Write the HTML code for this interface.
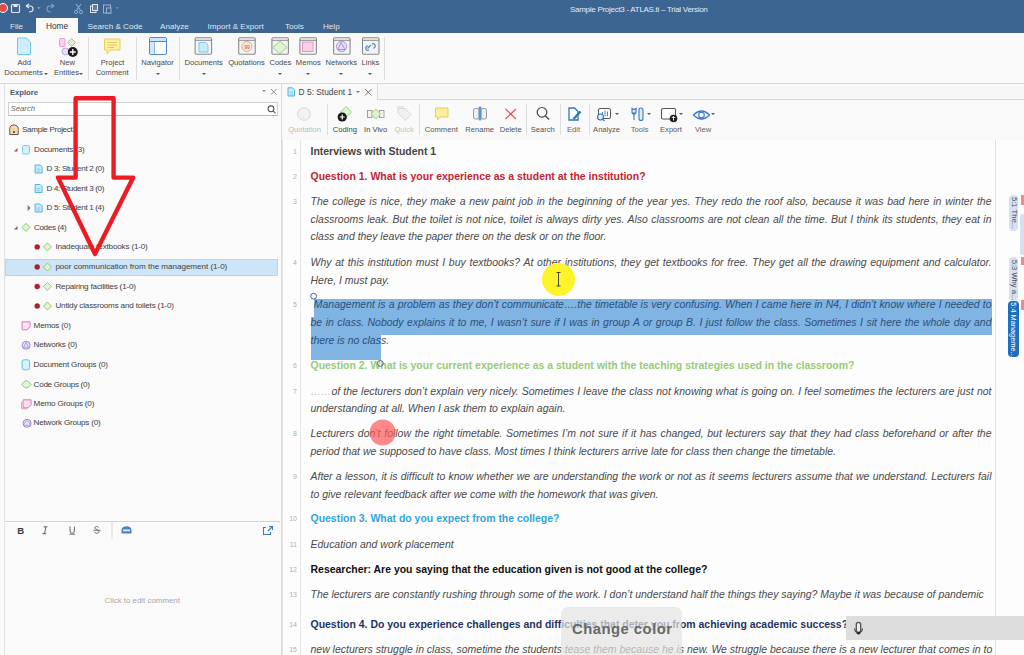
<!DOCTYPE html>
<html><head><meta charset="utf-8">
<style>
*{box-sizing:border-box;margin:0;padding:0}
html,body{width:1024px;height:655px;overflow:hidden;background:#fafafa;font-family:"Liberation Sans",sans-serif;position:relative}
.a{position:absolute;white-space:nowrap}
.dl{left:310.5px;width:681px;height:18px;line-height:18px;font-size:10.48px;color:#333;z-index:2}
.it{font-style:italic;color:#4a4a4a}
.j{text-align:justify;text-align-last:justify}
.hl{color:#2e507a}
.h1{font-weight:bold;color:#444}
.h1b{font-weight:bold;color:#111}
.q1{font-weight:bold;color:#c42330}
.q2{font-weight:bold;color:#97cb78}
.q3{font-weight:bold;color:#30a5dc}
.q4{font-weight:bold;color:#1f3262}
.lnum{left:283px;width:14px;text-align:right;font-size:7px;line-height:18px;color:#b0b0b0;z-index:2}
</style></head><body>
<div class="a" style="left:0;top:0;width:1024px;height:33px;background:#3d6591"></div>
<div class="a" style="left:36px;top:18px;width:42px;height:16px;background:#f9f9f9"></div>
<div class="a" style="left:10.0px;top:22.5px;font-size:8.1px;line-height:8.1px;color:#dfe7f0;">File</div>
<div class="a" style="left:87.5px;top:22.5px;font-size:8.1px;line-height:8.1px;color:#dfe7f0;">Search &amp; Code</div>
<div class="a" style="left:160.0px;top:22.5px;font-size:8.1px;line-height:8.1px;color:#dfe7f0;">Analyze</div>
<div class="a" style="left:207.5px;top:22.5px;font-size:8.1px;line-height:8.1px;color:#dfe7f0;">Import &amp; Export</div>
<div class="a" style="left:285.0px;top:22.5px;font-size:8.1px;line-height:8.1px;color:#dfe7f0;">Tools</div>
<div class="a" style="left:323.0px;top:22.5px;font-size:8.1px;line-height:8.1px;color:#dfe7f0;">Help</div>
<div class="a" style="left:46.0px;top:22.2px;font-size:8.3px;line-height:8.3px;color:#333;">Home</div>
<div class="a" style="left:570.0px;top:5.8px;font-size:8px;line-height:8.0px;color:#e4ebf3;letter-spacing:-0.28px">Sample Project3 - ATLAS.ti – Trial Version</div>
<svg class="a" style="left:0;top:0" width="130" height="18" viewBox="0 0 130 18">
<circle cx="3" cy="8" r="4.5" fill="#e04a4a" stroke="#fff" stroke-width="1"/>
<rect x="11.5" y="4.5" width="8" height="8" rx="1" fill="none" stroke="#dfe7f0" stroke-width="1.2"/>
<rect x="13.5" y="4.5" width="4" height="2.5" fill="#dfe7f0"/>
<path d="M26 6 L29 4 M26 6 L29 8 M26 6 H30 Q33 6 33 9 Q33 12 29 12" fill="none" stroke="#dfe7f0" stroke-width="1.2"/>
<path d="M37.5 7.5 l1.3 1.3 l1.3 -1.3z" fill="#dfe7f0"/>
<path d="M54 6 L51 4 M54 6 L51 8 M54 6 H50 Q47 6 47 9 Q47 12 51 12" fill="none" stroke="#7f9cc0" stroke-width="1.2"/>
<path d="M76 4 L81 11 M81 4 L76 11" stroke="#8ba8cc" stroke-width="1.2"/><circle cx="76" cy="12" r="1.6" fill="none" stroke="#8ba8cc"/><circle cx="81" cy="12" r="1.6" fill="none" stroke="#8ba8cc"/>
<rect x="90.5" y="6" width="5.5" height="6.5" fill="none" stroke="#dfe7f0" stroke-width="1"/><rect x="92.5" y="4.5" width="5" height="6" fill="#5a7ea8" stroke="#dfe7f0" stroke-width="1"/>
<rect x="103.5" y="5" width="7" height="8" fill="none" stroke="#9ab2d0" stroke-width="1"/><rect x="106.5" y="8" width="4.5" height="5" fill="#3d6591" stroke="#9ab2d0" stroke-width="1"/>
<path d="M116 7.5 l1.3 1.3 l1.3 -1.3z" fill="#9ab2d0"/>
</svg>
<div class="a" style="left:0;top:33px;width:1024px;height:51px;background:#f9f9f9;border-bottom:1px solid #d9d9d9"></div>
<div class="a" style="left:87.7px;top:37px;width:1px;height:43px;background:#dcdcdc"></div>
<div class="a" style="left:136.3px;top:37px;width:1px;height:43px;background:#dcdcdc"></div>
<div class="a" style="left:179.2px;top:37px;width:1px;height:43px;background:#dcdcdc"></div>
<div class="a" style="left:383.5px;top:37px;width:1px;height:43px;background:#dcdcdc"></div>
<div class="a" style="left:-35.8px;width:120px;text-align:center;top:59.2px;font-size:7.6px;line-height:7.6px;height:7.6px;color:#4a4a4a;">Add</div>
<div class="a" style="left:-36.5px;width:120px;text-align:center;top:69.2px;font-size:7.6px;line-height:7.6px;height:7.6px;color:#4a4a4a;">Documents</div>
<div class="a" style="left:43.5px;top:72.8px;width:0;height:0;border-left:2.0px solid transparent;border-right:2.0px solid transparent;border-top:2.0px solid #555"></div>
<div class="a" style="left:7.4px;width:120px;text-align:center;top:59.2px;font-size:7.6px;line-height:7.6px;height:7.6px;color:#4a4a4a;">New</div>
<div class="a" style="left:6.5px;width:120px;text-align:center;top:69.2px;font-size:7.6px;line-height:7.6px;height:7.6px;color:#4a4a4a;">Entities</div>
<div class="a" style="left:79.3px;top:72.8px;width:0;height:0;border-left:2.0px solid transparent;border-right:2.0px solid transparent;border-top:2.0px solid #555"></div>
<div class="a" style="left:52.5px;width:120px;text-align:center;top:59.2px;font-size:7.6px;line-height:7.6px;height:7.6px;color:#4a4a4a;">Project</div>
<div class="a" style="left:52.1px;width:120px;text-align:center;top:69.2px;font-size:7.6px;line-height:7.6px;height:7.6px;color:#4a4a4a;">Comment</div>
<div class="a" style="left:97.5px;width:120px;text-align:center;top:59.2px;font-size:7.6px;line-height:7.6px;height:7.6px;color:#4a4a4a;">Navigator</div>
<div class="a" style="left:155.8px;top:72.8px;width:0;height:0;border-left:2.0px solid transparent;border-right:2.0px solid transparent;border-top:2.0px solid #555"></div>
<div class="a" style="left:143.7px;width:120px;text-align:center;top:59.1px;font-size:7.6px;line-height:7.6px;height:7.6px;color:#4a4a4a;">Documents</div>
<div class="a" style="left:201.7px;top:72.8px;width:0;height:0;border-left:2.0px solid transparent;border-right:2.0px solid transparent;border-top:2.0px solid #555"></div>
<div class="a" style="left:186.5px;width:120px;text-align:center;top:59.1px;font-size:7.6px;line-height:7.6px;height:7.6px;color:#4a4a4a;">Quotations</div>
<div class="a" style="left:220.4px;width:120px;text-align:center;top:59.1px;font-size:7.6px;line-height:7.6px;height:7.6px;color:#4a4a4a;">Codes</div>
<div class="a" style="left:278.4px;top:72.8px;width:0;height:0;border-left:2.0px solid transparent;border-right:2.0px solid transparent;border-top:2.0px solid #555"></div>
<div class="a" style="left:248.3px;width:120px;text-align:center;top:59.1px;font-size:7.6px;line-height:7.6px;height:7.6px;color:#4a4a4a;">Memos</div>
<div class="a" style="left:306.3px;top:72.8px;width:0;height:0;border-left:2.0px solid transparent;border-right:2.0px solid transparent;border-top:2.0px solid #555"></div>
<div class="a" style="left:281.3px;width:120px;text-align:center;top:59.1px;font-size:7.6px;line-height:7.6px;height:7.6px;color:#4a4a4a;">Networks</div>
<div class="a" style="left:339.3px;top:72.8px;width:0;height:0;border-left:2.0px solid transparent;border-right:2.0px solid transparent;border-top:2.0px solid #555"></div>
<div class="a" style="left:310.4px;width:120px;text-align:center;top:59.1px;font-size:7.6px;line-height:7.6px;height:7.6px;color:#4a4a4a;">Links</div>
<div class="a" style="left:368.4px;top:72.8px;width:0;height:0;border-left:2.0px solid transparent;border-right:2.0px solid transparent;border-top:2.0px solid #555"></div>
<svg class="a" style="left:0;top:33px" width="390" height="25" viewBox="0 33 390 25">
<path d="M17.5 38 H26.5 L30.5 42 V54.5 H17.5 Z" fill="#cdeefa" stroke="#74c9e6" stroke-width="1"/>
<rect x="59.5" y="38.5" width="5.5" height="8" rx="1" fill="#f7d2ea" stroke="#e79ad0" stroke-width="1"/>
<path d="M71.5 38.5 L75.5 42.5 L71.5 46.5 L67.5 42.5 Z" fill="#dcf0cc" stroke="#9ed07c" stroke-width="1"/>
<circle cx="65.5" cy="51.5" r="3.5" fill="#e6def5" stroke="#b9a6e0" stroke-width="1"/>
<circle cx="72.8" cy="52" r="5" fill="#1d1d1d"/><path d="M72.8 49 V55 M69.8 52 H75.8" stroke="#fff" stroke-width="1.3"/>
<path d="M104.5 39 H120 V50 H110 L107 54 V50 H104.5 Z" fill="#fdf0a2" stroke="#e8cf58" stroke-width="1"/>
<path d="M107.5 42.5 H117 M107.5 45 H117 M107.5 47.5 H114" stroke="#d8b94a" stroke-width="0.7"/>
<rect x="149.5" y="37.5" width="17" height="17" rx="1.5" fill="#ffffff" stroke="#4d8bd0" stroke-width="1"/>
<rect x="150" y="38" width="16" height="3" fill="#cfe3f7"/><path d="M149.5 41.5 H166.5 M154.5 41.5 V54.5" stroke="#4d8bd0" stroke-width="1"/>
<rect x="150" y="42" width="4.5" height="12" fill="#d4e6f8"/>
<rect x="195.1" y="37.7" width="16.5" height="16.5" rx="1.2" fill="#f4f4f4" stroke="#8a8a8a" stroke-width="1.1"/><path d="M195.1 40.3 H211.6" stroke="#8a8a8a" stroke-width="1"/>
<rect x="238.7" y="37.7" width="16.5" height="16.5" rx="1.2" fill="#f4f4f4" stroke="#8a8a8a" stroke-width="1.1"/><path d="M238.7 40.3 H255.2" stroke="#8a8a8a" stroke-width="1"/>
<rect x="271.9" y="37.7" width="16.5" height="16.5" rx="1.2" fill="#f4f4f4" stroke="#8a8a8a" stroke-width="1.1"/><path d="M271.9 40.3 H288.4" stroke="#8a8a8a" stroke-width="1"/>
<rect x="299.9" y="37.7" width="16.5" height="16.5" rx="1.2" fill="#f4f4f4" stroke="#8a8a8a" stroke-width="1.1"/><path d="M299.9 40.3 H316.4" stroke="#8a8a8a" stroke-width="1"/>
<rect x="333.6" y="37.7" width="16.5" height="16.5" rx="1.2" fill="#f4f4f4" stroke="#8a8a8a" stroke-width="1.1"/><path d="M333.6 40.3 H350.1" stroke="#8a8a8a" stroke-width="1"/>
<rect x="362.5" y="37.7" width="16.5" height="16.5" rx="1.2" fill="#f4f4f4" stroke="#8a8a8a" stroke-width="1.1"/><path d="M362.5 40.3 H379.0" stroke="#8a8a8a" stroke-width="1"/>
<path d="M199 42.5 H205.5 L208 45 V52 H199 Z" fill="#c9ecf9" stroke="#6ec6e5" stroke-width="0.9"/>
<circle cx="246.9" cy="46.5" r="5" fill="#fde9dc" stroke="#e89a78" stroke-width="0.9"/><text x="244.2" y="48.8" font-size="5" fill="#d04030" font-family="Liberation Sans">99</text>
<path d="M279.9 41 L287 47.5 L279.9 54 L272.8 47.5 Z" fill="#e0f2d4" stroke="#9fd07e" stroke-width="1"/>
<rect x="302.5" y="42" width="10.5" height="9.5" fill="#f8cfe6" stroke="#e68fc6" stroke-width="0.9"/>
<circle cx="341.6" cy="46.5" r="5.2" fill="#e3dcf4" stroke="#a28fd8" stroke-width="0.9"/><path d="M338 49.5 L341 42.5 L345 49.5 Z" fill="none" stroke="#8d7ac8" stroke-width="0.7"/>
<path d="M367.5 48.5 l3.5 -3.5 M372 44 a2.2 2.2 0 0 1 3 3 l-1.5 1.5 M369 50 a2.2 2.2 0 0 1 -3 -3 l1.5 -1.5" fill="none" stroke="#4a86c8" stroke-width="1.2"/>
</svg>
<div class="a" style="left:4px;top:84px;width:278px;height:571px;background:#fafafa;border-left:1px solid #e2e2e2;border-right:1px solid #dcdcdc"></div>
<div class="a" style="left:10.0px;top:88.6px;font-size:7.6px;line-height:7.6px;color:#4b5670;font-weight:bold">Explore</div>
<div class="a" style="left:261.8px;top:90.1px;width:0;height:0;border-left:2.0px solid transparent;border-right:2.0px solid transparent;border-top:2.0px solid #888"></div>
<svg class="a" style="left:270px;top:87.5px" width="9" height="9"><path d="M1 1 L6.5 6.5 M6.5 1 L1 6.5" stroke="#888" stroke-width="1"/></svg>
<div class="a" style="left:7.5px;top:102.3px;width:270.5px;height:14px;background:#fff;border:1px solid #d0d0d0;border-bottom:1.5px solid #b8b8b8"></div>
<div class="a" style="left:10.5px;top:105.4px;font-size:7.8px;line-height:7.8px;color:#6a6a6a;font-style:italic">Search</div>
<svg class="a" style="left:266px;top:103px" width="12" height="12"><circle cx="5" cy="5.8" r="2.9" fill="none" stroke="#555" stroke-width="1.1"/><path d="M7.2 8 L9.5 10.3" stroke="#666" stroke-width="1.1"/></svg>
<div class="a" style="left:5px;top:258.5px;width:273px;height:17px;background:#cce5f8;border:1px solid #b3d7f3"></div>
<div class="a" style="left:22.0px;top:126.1px;font-size:8.1px;line-height:8.1px;color:#404040;letter-spacing:-0.315px">Sample Project3</div>
<div class="a" style="left:34.0px;top:145.6px;font-size:8.1px;line-height:8.1px;color:#404040;letter-spacing:-0.194px">Documents (3)</div>
<div class="a" style="left:46.6px;top:165.1px;font-size:8.1px;line-height:8.1px;color:#404040;letter-spacing:-0.359px">D 3: Student 2 (0)</div>
<div class="a" style="left:46.6px;top:184.6px;font-size:8.1px;line-height:8.1px;color:#404040;letter-spacing:-0.359px">D 4: Student 3 (0)</div>
<div class="a" style="left:46.6px;top:204.1px;font-size:8.1px;line-height:8.1px;color:#404040;letter-spacing:-0.359px">D 5: Student 1 (4)</div>
<div class="a" style="left:34.0px;top:223.5px;font-size:8.1px;line-height:8.1px;color:#404040;letter-spacing:-0.365px">Codes (4)</div>
<div class="a" style="left:55.4px;top:243.0px;font-size:8.1px;line-height:8.1px;color:#404040;letter-spacing:-0.173px">Inadequate textbooks (1-0)</div>
<div class="a" style="left:55.4px;top:263.1px;font-size:8.1px;line-height:8.1px;color:#404040;letter-spacing:-0.04px">poor communication from the management (1-0)</div>
<div class="a" style="left:55.4px;top:282.6px;font-size:8.1px;line-height:8.1px;color:#404040;letter-spacing:-0.176px">Repairing facilities (1-0)</div>
<div class="a" style="left:55.4px;top:302.1px;font-size:8.1px;line-height:8.1px;color:#404040;letter-spacing:-0.176px">Untidy classrooms and toilets (1-0)</div>
<div class="a" style="left:33.6px;top:321.9px;font-size:8.1px;line-height:8.1px;color:#404040;letter-spacing:-0.179px">Memos (0)</div>
<div class="a" style="left:33.6px;top:341.4px;font-size:8.1px;line-height:8.1px;color:#404040;letter-spacing:-0.205px">Networks (0)</div>
<div class="a" style="left:33.6px;top:360.9px;font-size:8.1px;line-height:8.1px;color:#404040;letter-spacing:-0.19px">Document Groups (0)</div>
<div class="a" style="left:33.6px;top:380.5px;font-size:8.1px;line-height:8.1px;color:#404040;letter-spacing:-0.28px">Code Groups (0)</div>
<div class="a" style="left:33.6px;top:399.9px;font-size:8.1px;line-height:8.1px;color:#404040;letter-spacing:-0.188px">Memo Groups (0)</div>
<div class="a" style="left:33.6px;top:419.4px;font-size:8.1px;line-height:8.1px;color:#404040;letter-spacing:-0.204px">Network Groups (0)</div>
<svg class="a" style="left:0;top:0" width="290" height="440">
<path d="M9.8 129.0 Q9.8 125.0 14 125.0 Q18.2 125.0 18.2 129.0 V134.5 H9.8 Z" fill="#f3d9c8" stroke="#6a5048" stroke-width="1"/><path d="M10 129.7 H18" stroke="#f5d58a" stroke-width="2"/><circle cx="14" cy="132.0" r="1" fill="#333"/>
<rect x="22.5" y="145.5" width="7" height="8.5" rx="1.3" fill="#d3f0fb" stroke="#7acfe9" stroke-width="1"/>
<path d="M14.0 151.5 L17.5 151.5 L17.5 148.0 Z" fill="#666"/>
<path d="M35.1 165.0 H40.1 L42.1 167.0 V173.0 H35.1 Z" fill="#c9ecf9" stroke="#4fb8de" stroke-width="1"/><path d="M36.6 169.0 H40.1 M36.6 171.0 H40.1" stroke="#4fb8de" stroke-width="0.6"/>
<path d="M35.1 184.5 H40.1 L42.1 186.5 V192.5 H35.1 Z" fill="#c9ecf9" stroke="#4fb8de" stroke-width="1"/><path d="M36.6 188.5 H40.1 M36.6 190.5 H40.1" stroke="#4fb8de" stroke-width="0.6"/>
<path d="M35.1 204.0 H40.1 L42.1 206.0 V212.0 H35.1 Z" fill="#c9ecf9" stroke="#4fb8de" stroke-width="1"/><path d="M36.6 208.0 H40.1 M36.6 210.0 H40.1" stroke="#4fb8de" stroke-width="0.6"/>
<path d="M27.6 205.0 L30.6 208.0 L27.6 211.0 Z" fill="#777"/>
<path d="M26.0 223.4 L30.0 227.4 L26.0 231.4 L22.0 227.4 Z" fill="#e2f3d6" stroke="#8fcb6c" stroke-width="1"/>
<path d="M14.0 229.4 L17.5 229.4 L17.5 225.9 Z" fill="#666"/>
<path d="M47.4 242.9 L51.4 246.9 L47.4 250.9 L43.4 246.9 Z" fill="#e2f3d6" stroke="#8fcb6c" stroke-width="1"/>
<circle cx="37.2" cy="246.9" r="2.7" fill="#b0202a"/>
<path d="M47.4 263.0 L51.4 267.0 L47.4 271.0 L43.4 267.0 Z" fill="#e2f3d6" stroke="#8fcb6c" stroke-width="1"/>
<circle cx="37.2" cy="267.0" r="2.7" fill="#b0202a"/>
<path d="M47.4 282.5 L51.4 286.5 L47.4 290.5 L43.4 286.5 Z" fill="#e2f3d6" stroke="#8fcb6c" stroke-width="1"/>
<circle cx="37.2" cy="286.5" r="2.7" fill="#b0202a"/>
<path d="M47.4 302.0 L51.4 306.0 L47.4 310.0 L43.4 306.0 Z" fill="#e2f3d6" stroke="#8fcb6c" stroke-width="1"/>
<circle cx="37.2" cy="306.0" r="2.7" fill="#b0202a"/>
<path d="M22.1 321.8 H30.1 V326.8 L27.1 329.8 H22.1 Z" fill="#fbe0ef" stroke="#e07cb8" stroke-width="1"/>
<circle cx="26.1" cy="345.3" r="4" fill="#ebe4f7" stroke="#9d88d4" stroke-width="1"/><path d="M23.6 347.3 L26.1 342.3 L28.6 347.3Z" fill="none" stroke="#9d88d4" stroke-width="0.7"/>
<rect x="22.1" y="359.8" width="7.5" height="10" rx="2" fill="#d6f2fc" stroke="#5ec2e4" stroke-width="1"/>
<path d="M21.6 384.4 L25.1 380.9 H27.6 L31.1 384.4 L27.6 387.9 H25.1 Z" fill="#e2f3d6" stroke="#8fcb6c" stroke-width="1"/>
<path d="M23.1 399.8 H31.1 V404.8 L28.1 407.8 H23.1 Z" fill="#fbe0ef" stroke="#e07cb8" stroke-width="1"/><path d="M21.6 401.8 V408.8 H27.1" fill="none" stroke="#e07cb8" stroke-width="0.8"/>
<circle cx="27.1" cy="423.3" r="4" fill="#ebe4f7" stroke="#9d88d4" stroke-width="1"/><path d="M23.1 425.3 L27.1 420.3 L31.1 425.3Z" fill="none" stroke="#9d88d4" stroke-width="0.7"/>
</svg>
<div class="a" style="left:5px;top:520.5px;width:275px;height:1px;background:#d4d4d4"></div>
<svg class="a" style="left:0;top:515px" width="150" height="30" viewBox="0 515 150 30">
<text x="17.3" y="533.6" font-size="9.6" font-weight="bold" fill="#3a3a3a" font-family="Liberation Sans">B</text>
<path d="M43.5 526.8 H47.5 M45.8 526.8 L44.6 533.4 M42.3 533.6 H46.3" stroke="#555" stroke-width="0.9" fill="none"/>
<path d="M70 526.5 V531 a2.2 2.2 0 0 0 4.4 0 V526.5 M69.5 534.2 H75" stroke="#555" stroke-width="0.9" fill="none"/>
<path d="M98.8 527.5 a2.2 1.6 0 0 0 -4.2 0.5 c0 1.2 4.4 1.6 4.4 3.3 a2.2 1.6 0 0 1 -4.5 0.6 M93.5 530.3 H100.5" stroke="#666" stroke-width="0.9" fill="none"/>
<line x1="112" y1="522" x2="112" y2="539" stroke="#d8d8d8" stroke-width="1"/>
<path d="M121.5 530 a5 3.8 0 0 1 10 0 v3.5 h-10z" fill="#4a80c8"/>
<rect x="123" y="529.5" width="7" height="1.8" fill="#e8eef8"/>
</svg>
<svg class="a" style="left:262px;top:525px" width="12" height="11"><path d="M7 1.5 H10.5 V5 M10.5 1.5 L6 6 M8.5 7 V9.5 H1.5 V2.5 H4" fill="none" stroke="#3a78c4" stroke-width="1.1"/></svg>
<div class="a" style="left:104.5px;top:597.3px;font-size:7.9px;line-height:7.9px;color:#a8a8a8;">Click to edit comment</div>
<div class="a" style="left:282px;top:84px;width:742px;height:56px;background:#f9f9f9"></div>
<div class="a" style="left:377px;top:84px;width:647px;height:16px;background:#f7f7f7;border-bottom:1px solid #d8d8d8;border-left:1px solid #dcdcdc"></div>
<div class="a" style="left:282px;top:139.5px;width:742px;height:1px;background:#e2e2e2"></div>
<svg class="a" style="left:287px;top:87px" width="9" height="10"><path d="M1 0.8 H5.5 L7.5 2.8 V9 H1 Z" fill="#c9ecf9" stroke="#4fb8de" stroke-width="1"/><path d="M2.5 5 H6 M2.5 7 H6" stroke="#4fb8de" stroke-width="0.6"/></svg>
<div class="a" style="left:298.6px;top:87.5px;font-size:8.4px;line-height:8.4px;color:#444;">D 5: Student 1</div>
<div class="a" style="left:355.9px;top:90.8px;width:0;height:0;border-left:2.3px solid transparent;border-right:2.3px solid transparent;border-top:2.3px solid #777"></div>
<svg class="a" style="left:364px;top:87.5px" width="9" height="9"><path d="M1 1 L7.5 7.5 M7.5 1 L1 7.5" stroke="#777" stroke-width="1"/></svg>
<div class="a" style="left:327.2px;top:104px;width:1px;height:31px;background:#dedede"></div>
<div class="a" style="left:419.1px;top:104px;width:1px;height:31px;background:#dedede"></div>
<div class="a" style="left:526.4px;top:104px;width:1px;height:31px;background:#dedede"></div>
<div class="a" style="left:559.6px;top:104px;width:1px;height:31px;background:#dedede"></div>
<div class="a" style="left:588.5px;top:104px;width:1px;height:31px;background:#dedede"></div>
<div class="a" style="left:244.6px;width:120px;text-align:center;top:125.6px;font-size:7.6px;line-height:7.6px;height:7.6px;color:#bdbdbd;">Quotation</div>
<div class="a" style="left:284.9px;width:120px;text-align:center;top:125.6px;font-size:7.6px;line-height:7.6px;height:7.6px;color:#444;">Coding</div>
<div class="a" style="left:315.6px;width:120px;text-align:center;top:125.6px;font-size:7.6px;line-height:7.6px;height:7.6px;color:#444;">In Vivo</div>
<div class="a" style="left:344.1px;width:120px;text-align:center;top:125.6px;font-size:7.6px;line-height:7.6px;height:7.6px;color:#c4c4c4;">Quick</div>
<div class="a" style="left:381.3px;width:120px;text-align:center;top:125.6px;font-size:7.6px;line-height:7.6px;height:7.6px;color:#555;">Comment</div>
<div class="a" style="left:419.6px;width:120px;text-align:center;top:125.6px;font-size:7.6px;line-height:7.6px;height:7.6px;color:#555;">Rename</div>
<div class="a" style="left:450.7px;width:120px;text-align:center;top:125.6px;font-size:7.6px;line-height:7.6px;height:7.6px;color:#555;">Delete</div>
<div class="a" style="left:482.8px;width:120px;text-align:center;top:125.6px;font-size:7.6px;line-height:7.6px;height:7.6px;color:#555;">Search</div>
<div class="a" style="left:513.6px;width:120px;text-align:center;top:125.6px;font-size:7.6px;line-height:7.6px;height:7.6px;color:#666;">Edit</div>
<div class="a" style="left:546.6px;width:120px;text-align:center;top:125.6px;font-size:7.6px;line-height:7.6px;height:7.6px;color:#555;">Analyze</div>
<div class="a" style="left:579.6px;width:120px;text-align:center;top:125.6px;font-size:7.6px;line-height:7.6px;height:7.6px;color:#666;">Tools</div>
<div class="a" style="left:611.0px;width:120px;text-align:center;top:125.6px;font-size:7.6px;line-height:7.6px;height:7.6px;color:#555;">Export</div>
<div class="a" style="left:643.1px;width:120px;text-align:center;top:125.6px;font-size:7.6px;line-height:7.6px;height:7.6px;color:#666;">View</div>
<div class="a" style="left:615.0px;top:113.3px;width:0;height:0;border-left:2.2px solid transparent;border-right:2.2px solid transparent;border-top:2.2px solid #555"></div>
<div class="a" style="left:647.4px;top:113.3px;width:0;height:0;border-left:2.2px solid transparent;border-right:2.2px solid transparent;border-top:2.2px solid #555"></div>
<div class="a" style="left:679.4px;top:113.3px;width:0;height:0;border-left:2.2px solid transparent;border-right:2.2px solid transparent;border-top:2.2px solid #555"></div>
<div class="a" style="left:711.3px;top:113.3px;width:0;height:0;border-left:2.2px solid transparent;border-right:2.2px solid transparent;border-top:2.2px solid #555"></div>
<svg class="a" style="left:0;top:0" width="720" height="140" viewBox="0 0 720 140">
<circle cx="304" cy="114" r="6.3" fill="#f2f2f2" stroke="#d6d6d6" stroke-width="1"/><text x="300.8" y="117" font-size="6" fill="#c8c8c8" font-family="Liberation Sans">,,</text>
<path d="M346 106.5 L351.5 112 L346 117.5 L340.5 112 Z" fill="#e0f2d2" stroke="#9fd07e" stroke-width="1"/>
<circle cx="342.2" cy="117" r="4.6" fill="#151515"/><path d="M342.2 114.5 V119.5 M339.7 117 H344.7" stroke="#fff" stroke-width="1.2"/>
<rect x="367.5" y="110.5" width="4.5" height="7" fill="#f4f4f4" stroke="#999" stroke-width="0.9"/><rect x="379.5" y="110.5" width="4.5" height="7" fill="#f4f4f4" stroke="#999" stroke-width="0.9"/>
<path d="M375.8 109 L380.5 114 L375.8 119 L371 114 Z" fill="#dff2d0" stroke="#9fd07e" stroke-width="1"/>
<path d="M398 108.5 H405 L411 114.5 L405.5 120.5 L398 113 Z" fill="#f0f0f0" stroke="#d8d8d8" stroke-width="1"/><path d="M397 106.5 H404 M397 108 H404" stroke="#d0d0d0" stroke-width="0.6"/>
<path d="M435.5 108 H448 V117 H440 L437.5 120 V117 H435.5 Z" fill="#fdeea0" stroke="#e8cf58" stroke-width="1"/>
<rect x="473.5" y="108.5" width="5.5" height="10.5" rx="2" fill="#f0f0f0" stroke="#999" stroke-width="1"/><rect x="481" y="108.5" width="5.5" height="10.5" rx="2" fill="#f0f0f0" stroke="#999" stroke-width="1"/>
<rect x="478.6" y="106.5" width="2.8" height="14" rx="1" fill="#5e9ad8"/>
<path d="M505.5 109 L516 119 M516 109 L505.5 119" stroke="#e05050" stroke-width="1.1"/>
<circle cx="542" cy="112.3" r="4.8" fill="none" stroke="#444" stroke-width="1.2"/><path d="M545.5 116 L549 119.5" stroke="#444" stroke-width="1.3"/>
<path d="M569 108 H574.5 L578 111.5 V120 H569 Z" fill="#fff" stroke="#2f75c4" stroke-width="1.3"/><path d="M573.5 119 L580.5 111.5" stroke="#2f75c4" stroke-width="2.4"/>
<rect x="598.5" y="108.5" width="12" height="10" rx="1.5" fill="#fff" stroke="#555" stroke-width="1"/><path d="M602.5 116 V112 M605 116 V110.5 M607.5 116 V111.5" stroke="#3a78c4" stroke-width="0.9"/>
<circle cx="600.5" cy="117" r="3" fill="#e0ecf8" stroke="#2f75c4" stroke-width="1.1"/><path d="M602.5 119 L604.5 121" stroke="#2f75c4" stroke-width="1.1"/>
<path d="M632 108.5 a3 3 0 0 0 4 0 V112 a2 2 0 0 1 -4 0 Z M634 112 V120" fill="#e0ecf8" stroke="#3a78c4" stroke-width="1.1"/>
<rect x="639" y="108" width="4" height="12.5" rx="2" fill="#e0ecf8" stroke="#3a78c4" stroke-width="1.1"/>
<rect x="661.5" y="108.5" width="14" height="10.5" rx="1.5" fill="#fff" stroke="#555" stroke-width="1.1"/>
<circle cx="673.5" cy="118.5" r="3.8" fill="#222"/><path d="M673.5 120.5 V116.5 M671.8 118 L673.5 116.3 L675.2 118" fill="none" stroke="#fff" stroke-width="0.9"/>
<path d="M693.5 115 Q701.5 107 709.5 115 Q701.5 123 693.5 115 Z" fill="#eef4fb" stroke="#3a78c4" stroke-width="1.2"/><circle cx="701.5" cy="115" r="2.8" fill="none" stroke="#3a78c4" stroke-width="1.1"/>
</svg>
<div class="a" style="left:282px;top:140px;width:742px;height:515px;background:#fdfdfd;border-left:1px solid #e2e2e2"></div>
<div class="a" style="left:300px;top:140px;width:1px;height:515px;background:#e6e6e6"></div>
<div class="a" style="left:995px;top:140px;width:1px;height:515px;background:#e0e0e0"></div>
<div class="a" style="left:313.5px;top:298.6px;width:678.5px;height:18.4px;background:#7fb4e3;z-index:1"></div>
<div class="a" style="left:310.5px;top:317px;width:681.5px;height:18px;background:#7fb4e3;z-index:1"></div>
<div class="a" style="left:310.5px;top:335px;width:70px;height:25px;background:#7fb4e3;z-index:1"></div>
<div class="a dl h1" style="top:142.8px">Interviews with Student 1</div>
<div class="a lnum" style="top:142.8px">1</div>
<div class="a dl q1" style="top:168.2px">Question 1. What is your experience as a student at the institution?</div>
<div class="a lnum" style="top:168.2px">2</div>
<div class="a dl it j" style="top:193.2px">The college is nice, they make a new paint job in the beginning of the year yes. They redo the roof also, because it was bad here in winter the</div>
<div class="a lnum" style="top:193.2px">3</div>
<div class="a dl it j" style="top:210.8px">classrooms leak. But the toilet is not nice, toilet is always dirty yes. Also classrooms are not clean all the time. But I think its students, they eat in</div>
<div class="a dl it" style="top:228.3px">class and they leave the paper there on the desk or on the floor.</div>
<div class="a dl it j" style="top:253.5px">Why at this institution must I buy textbooks? At other institutions, they get textbooks for free. They get all the drawing equipment and calculator.</div>
<div class="a lnum" style="top:253.5px">4</div>
<div class="a dl it" style="top:271.5px">Here, I must pay.</div>
<div class="a dl it hl j" style="top:296.0px;left:313.8px;width:677.7px">Management is a problem as they don’t communicate….the timetable is very confusing. When I came here in N4, I didn’t know where I needed to</div>
<div class="a lnum" style="top:296.0px">5</div>
<div class="a dl it hl j" style="top:313.9px">be in class. Nobody explains it to me, I wasn’t sure if I was in group A or group B. I just follow the class. Sometimes I sit here the whole day and</div>
<div class="a dl it hl" style="top:331.8px">there is no clas<span style='color:#555'>s.</span></div>
<div class="a dl q2" style="top:357.0px">Question 2. What is your current experience as a student with the teaching strategies used in the classroom?</div>
<div class="a lnum" style="top:357.0px">6</div>
<div class="a dl it j" style="top:382.9px"><span style='color:#bbb'>……</span>of the lecturers don’t explain very nicely. Sometimes I leave the class not knowing what is going on. I feel sometimes the lecturers are just not</div>
<div class="a lnum" style="top:382.9px">7</div>
<div class="a dl it" style="top:400.2px">understanding at all. When I ask them to explain again.</div>
<div class="a dl it j" style="top:425.4px">Lecturers don’t follow the right timetable. Sometimes I’m not sure if it has changed, but lecturers say that they had class beforehand or after the</div>
<div class="a lnum" style="top:425.4px">8</div>
<div class="a dl it" style="top:442.8px">period that we supposed to have class. Most times I think lecturers arrive late for class then change the timetable.</div>
<div class="a dl it j" style="top:467.9px">After a lesson, it is difficult to know whether we are understanding the work or not as it seems lecturers assume that we understand. Lecturers fail</div>
<div class="a lnum" style="top:467.9px">9</div>
<div class="a dl it" style="top:485.9px">to give relevant feedback after we come with the homework that was given.</div>
<div class="a dl q3" style="top:510.3px">Question 3. What do you expect from the college?</div>
<div class="a lnum" style="top:510.3px">10</div>
<div class="a dl it" style="top:535.8px">Education and work placement</div>
<div class="a lnum" style="top:535.8px">11</div>
<div class="a dl h1b" style="top:560.6px">Researcher: Are you saying that the education given is not good at the college?</div>
<div class="a lnum" style="top:560.6px">12</div>
<div class="a dl it" style="top:585.8px">The lecturers are constantly rushing through some of the work. I don’t understand half the things they saying? Maybe it was because of pandemic</div>
<div class="a lnum" style="top:585.8px">13</div>
<div class="a dl q4" style="top:616.3px">Question 4. Do you experience challenges and difficulties that deter you from achieving academic success?</div>
<div class="a lnum" style="top:616.3px">14</div>
<div class="a dl it j" style="top:641.1px">new lecturers struggle in class, sometime the students tease them because he is new. We struggle because there is a new lecturer that comes in to</div>
<div class="a lnum" style="top:641.1px">15</div><svg class="a" style="left:0;top:0;z-index:3" width="1024" height="655"><circle cx="313.6" cy="296.2" r="2.9" fill="#fff" fill-opacity="0.3" stroke="#4f5f90" stroke-width="1"/><circle cx="380.3" cy="363.4" r="2.9" fill="#fff" fill-opacity="0.3" stroke="#4f5f90" stroke-width="1"/><circle cx="558.5" cy="279.4" r="16.5" fill="#fff32a"/><path d="M556.5 272.5 h4 M558.5 272.5 V286 M556.5 286 h4" stroke="#333" stroke-width="0.9"/><circle cx="382.6" cy="432.5" r="13" fill="#ff5a5a" fill-opacity="0.72"/></svg>
<div class="a" style="left:1008.7px;top:195px;width:9.6px;height:36px;background:#d6e0f0;border-radius:4px;z-index:2"></div>
<div class="a" style="left:1008.7px;top:257px;width:9.6px;height:44px;background:#d6e0f0;border-radius:4px;z-index:2"></div>
<div class="a" style="left:1007.5px;top:301px;width:11.5px;height:56px;background:#1f6fc0;border-radius:4px;z-index:2"></div>
<div class="a" style="left:1020.3px;top:214px;width:6px;height:41px;background:#d6e0f0;border-radius:3px;z-index:2"></div>
<div class="a" style="left:1021px;top:195px;width:3px;height:10px;background:#f08a8a;z-index:2"></div>
<div class="a" style="left:1021px;top:257px;width:3px;height:8px;background:#f08a8a;z-index:2"></div>
<div class="a" style="left:1021px;top:300px;width:3px;height:10px;background:#f08a8a;z-index:2"></div>
<div class="a" style="left:1013.5px;top:213px;font-size:7.6px;line-height:8px;color:#4a5060;transform:translate(-50%,-50%) rotate(90deg);z-index:3">5:1 The...</div>
<div class="a" style="left:1013.5px;top:280px;font-size:7.6px;line-height:8px;color:#4a5060;transform:translate(-50%,-50%) rotate(90deg);z-index:3">5:3 Why a...</div>
<div class="a" style="left:1013.3px;top:330px;font-size:7.4px;line-height:8px;color:#fff;transform:translate(-50%,-50%) rotate(90deg);z-index:3">5:4 Manageme...</div>
<div class="a" style="left:561px;top:607px;width:120.5px;height:52px;background:rgba(226,226,226,0.7);border-radius:7px;z-index:4"></div>
<div class="a" style="left:572.0px;top:622.3px;font-size:14.8px;line-height:14.8px;color:#686868;font-weight:bold;letter-spacing:0.5px;z-index:5">Change color</div>
<div class="a" style="left:846px;top:615.5px;width:178px;height:24.5px;background:#dddddd;z-index:4"></div>
<svg class="a" style="left:850px;top:618px;z-index:5" width="16" height="20"><rect x="6.3" y="4.3" width="4.4" height="10" rx="2.2" fill="#eaeaea" stroke="#555" stroke-width="1.3"/><path d="M4.6 10.5 a3.9 4.2 0 0 0 7.8 0" fill="none" stroke="#444" stroke-width="1.2"/><ellipse cx="8.5" cy="15.3" rx="2" ry="1.1" fill="#222"/></svg>
<svg class="a" style="left:0;top:0;z-index:6" width="300" height="300"><path d="M75.6 98.2 H113.6 V177.6 H133.2 L95 254 L58 177.6 H75.6 Z" fill="none" stroke="#ec1c24" stroke-width="4.4" stroke-linejoin="round"/></svg>
</body></html>
